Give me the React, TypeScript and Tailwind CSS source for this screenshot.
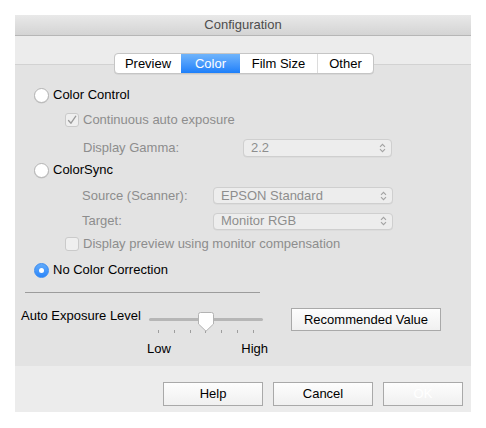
import React from "react";

const font = { fontFamily: '"Liberation Sans", Arial, sans-serif' };

function Radio({ checked }: { checked?: boolean }) {
  if (checked) {
    return (
      <div className="w-[15px] h-[15px] rounded-full bg-gradient-to-b from-[#62abfb] to-[#2a86fa] border border-[#3b8cf0] flex items-center justify-center shrink-0">
        <div className="w-[5px] h-[5px] rounded-full bg-white" />
      </div>
    );
  }
  return (
    <div className="w-[15px] h-[15px] rounded-full bg-white border border-[#b4b4b4] shadow-[0_0.5px_0.5px_rgba(0,0,0,0.12)] shrink-0" />
  );
}

function Checkbox({ checked }: { checked?: boolean }) {
  return (
    <div className="w-[14px] h-[14px] rounded-[3px] bg-[#efefef] border border-[#cacaca] flex items-center justify-center shrink-0">
      {checked && (
        <svg width="10" height="10" viewBox="0 0 10 10">
          <polyline points="1.5,5.5 4,8.2 8.8,1.2" fill="none" stroke="#9a9a9a" strokeWidth="1.3" strokeLinecap="round" strokeLinejoin="round" />
        </svg>
      )}
    </div>
  );
}

function UpDown() {
  return (
    <svg width="7" height="10" viewBox="0 0 7 10">
      <polyline points="1,3.8 3.5,1.3 6,3.8" fill="none" stroke="#a3a3a3" strokeWidth="1.1" />
      <polyline points="1,6.2 3.5,8.7 6,6.2" fill="none" stroke="#a3a3a3" strokeWidth="1.1" />
    </svg>
  );
}

function Select({ value, w, h }: { value: string; w: string; h: string }) {
  return (
    <div className={`${w} ${h} rounded-[4px] bg-[#ededed] border border-[#cfcfcf] shadow-[0_0.5px_0_rgba(0,0,0,0.06)] flex items-center justify-between pl-[7px] pr-[5px] text-[13px] text-[#8d8d8d]`}>
      <span>{value}</span>
      <UpDown />
    </div>
  );
}

function Button({ label, w, disabled }: { label: string; w: string; disabled?: boolean }) {
  return (
    <div className={`${w} h-[24px] border border-[#a9a9a9] bg-gradient-to-b from-[#fdfdfd] to-[#f0f0f0] flex items-center justify-center text-[13px] ${disabled ? "text-white" : "text-black"}`}>
      {label}
    </div>
  );
}

export default function App() {
  const tabs = [
    { label: "Preview", w: "w-[66px]" },
    { label: "Color", w: "w-[59px]", active: true },
    { label: "Film Size", w: "w-[77px]" },
    { label: "Other", w: "w-[56px]" },
  ];
  return (
    <div className="w-[486px] h-[428px] bg-white pt-[15px] pl-[15px]" style={font}>
      <div className="w-[456px] h-[397px] flex flex-col bg-[#ececec]">
        {/* Title bar */}
        <div className="h-[21px] shrink-0 bg-gradient-to-b from-[#e9e9e9] to-[#d4d4d4] border-b border-[#b6b6b6] flex items-center justify-center text-[13px] text-[#4d4d4d]">
          Configuration
        </div>
        {/* Tabs */}
        <div className="h-[28px] shrink-0 flex justify-center pt-[17px] pl-[2px]">
          <div className="relative z-10 h-[21px] flex rounded-[4px] border border-[#c5c5c5] bg-white overflow-hidden shadow-[0_0.5px_0.5px_rgba(0,0,0,0.1)]">
            {tabs.map((t, i) => (
              <div
                key={t.label}
                className={`${t.w} h-full flex items-center justify-center text-[13px] ${
                  t.active
                    ? "bg-gradient-to-b from-[#6fb4fb] to-[#1b7ffa] text-white"
                    : "text-black"
                } ${i > 0 && !t.active && !tabs[i - 1].active ? "border-l border-[#dcdcdc]" : ""}`}
              >
                {t.label}
              </div>
            ))}
          </div>
        </div>
        {/* Content box */}
        <div className="h-[302px] shrink-0 bg-[#e3e3e3] border-t border-[#d2d2d2] flex flex-col pt-[20px] text-[13px]">
          <div className="h-[20px] flex items-center pl-[19px] gap-[4px] text-black">
            <Radio />
            <span>Color Control</span>
          </div>
          <div className="h-[30px] flex items-center pl-[50px] gap-[4px] text-[#8d8d8d]">
            <Checkbox checked />
            <span>Continuous auto exposure</span>
          </div>
          <div className="h-[26px] flex items-center pl-[68px] text-[#8d8d8d]">
            <span className="w-[160px]">Display Gamma:</span>
            <Select value="2.2" w="w-[149px]" h="h-[18px]" />
          </div>
          <div className="h-[18px] flex items-center pl-[19px] gap-[4px] text-black">
            <Radio />
            <span>ColorSync</span>
          </div>
          <div className="h-[33px] flex items-center pl-[67px] text-[#8d8d8d]">
            <span className="w-[131px]">Source (Scanner):</span>
            <Select value="EPSON Standard" w="w-[180px]" h="h-[17px]" />
          </div>
          <div className="h-[18px] flex items-center pl-[67px] text-[#8d8d8d]">
            <span className="w-[131px]">Target:</span>
            <Select value="Monitor RGB" w="w-[180px]" h="h-[17px]" />
          </div>
          <div className="h-[28px] flex items-center pl-[50px] gap-[4px] text-[#8d8d8d]">
            <Checkbox />
            <span>Display preview using monitor compensation</span>
          </div>
          <div className="h-[24px] flex items-center pl-[19px] gap-[4px] text-black">
            <Radio checked />
            <span>No Color Correction</span>
          </div>
          <div className="mt-[10px] ml-[10px] w-[235px] h-px bg-[#9c9c9c]" />
          <div className="pt-[15px] flex items-start text-black">
            <span className="pl-[6px] w-[134px] leading-[16px]">Auto Exposure Level</span>
            <div className="w-[114px] flex flex-col">
              <div className="relative h-[22px]">
                <div className="absolute left-0 right-0 top-[10px] h-[3px] rounded-full bg-[#b6b6b6]" />
                <svg className="absolute left-[49px] top-[4px]" width="16" height="20" viewBox="0 0 16 20">
                  <path d="M2.5 0.5 H13.5 Q15.5 0.5 15.5 2.5 V12 L8 19.2 L0.5 12 V2.5 Q0.5 0.5 2.5 0.5 Z" fill="#ffffff" stroke="#b3b3b3" strokeWidth="1" />
                </svg>
              </div>
              <div className="h-[3px] flex justify-between px-[9px]">
                {[0, 1, 2, 3, 4, 5, 6].map((i) => (
                  <div key={i} className="w-px h-[3px] bg-[#9e9e9e]" />
                ))}
              </div>
              <div className="mt-[8px] -ml-[2px] w-[121px] flex justify-between leading-[16px]">
                <span>Low</span>
                <span>High</span>
              </div>
            </div>
            <div className="ml-[28px] w-[150px] h-[23px] border border-[#a9a9a9] bg-gradient-to-b from-[#fdfdfd] to-[#f0f0f0] flex items-center justify-center text-[13px]">
              Recommended Value
            </div>
          </div>
        </div>
        {/* Bottom buttons */}
        <div className="h-[46px] shrink-0 flex justify-end items-start pt-[16px] pr-[8px] gap-[10px]">
          <Button label="Help" w="w-[100px]" />
          <Button label="Cancel" w="w-[100px]" />
          <Button label="OK" w="w-[80px]" disabled />
        </div>
      </div>
    </div>
  );
}
